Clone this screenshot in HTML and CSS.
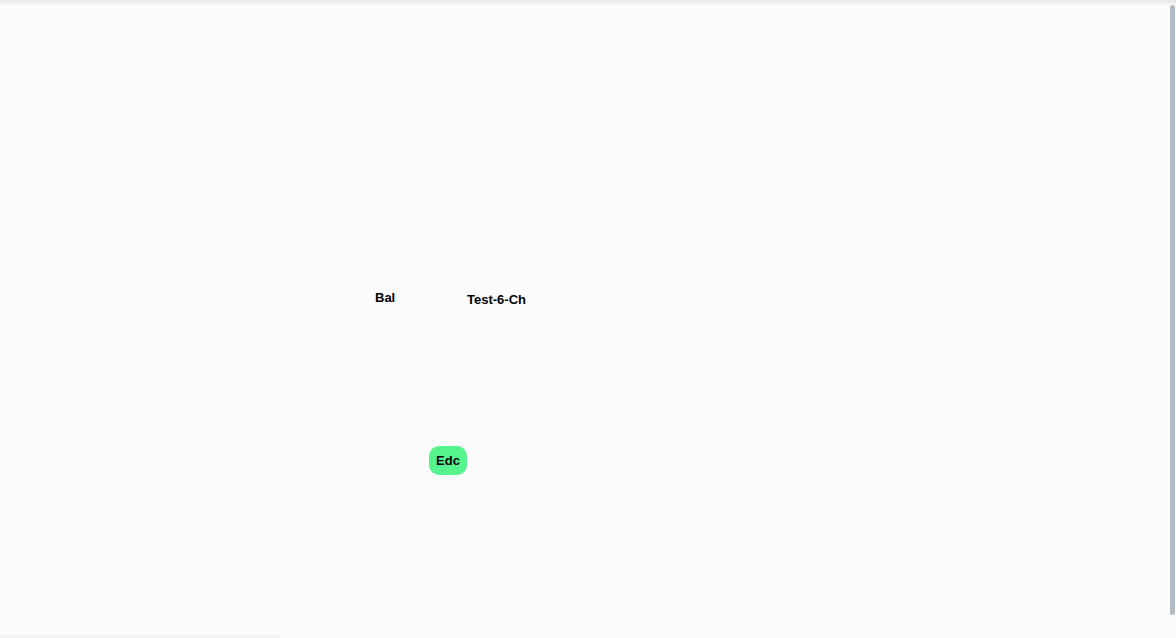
FILE: index.html
```html
<!DOCTYPE html>
<html>
<head>
<meta charset="utf-8">
<link rel="stylesheet" href="styles.css">
</head>
<body>
<div class="canvas">
  <div class="topshade"></div>
  <div class="node label" style="left:375px;top:290px">Bal</div>
  <div class="node label" style="left:467px;top:292px">Test-6-Ch</div>
  <div class="node pill" style="left:429px;top:446px">Edc</div>
  <div class="scroll-thumb"></div>
  <div class="bottom-strip"></div>
</div>
</body>
</html>
```
FILE: styles.css
```css
html, body {
  margin: 0;
  padding: 0;
  width: 100%;
  height: 100%;
  overflow: hidden;
  background: #fcfcfc;
  font-family: "Liberation Sans", Arial, sans-serif;
}
.canvas {
  position: relative;
  width: 1176px;
  height: 638px;
  background: #fcfcfc;
}
.topshade {
  position: absolute;
  left: 0;
  top: 0;
  width: 100%;
  height: 6px;
  background: linear-gradient(to bottom, #e6e6ea, #fcfcfc);
}
.node {
  position: absolute;
  font-size: 13px;
  font-weight: bold;
  color: #000;
  line-height: 15px;
  white-space: nowrap;
}
.pill {
  width: 38px;
  height: 29px;
  border-radius: 10px;
  background: #56f48e;
  display: flex;
  align-items: center;
  justify-content: center;
}
.scroll-thumb {
  position: absolute;
  left: 1170px;
  top: 5px;
  width: 5px;
  height: 610px;
  border-radius: 3px;
  background: #b3bbc3;
}
.bottom-strip {
  position: absolute;
  left: 0;
  top: 635px;
  width: 280px;
  height: 3px;
  background: #f4f4f4;
}
```
